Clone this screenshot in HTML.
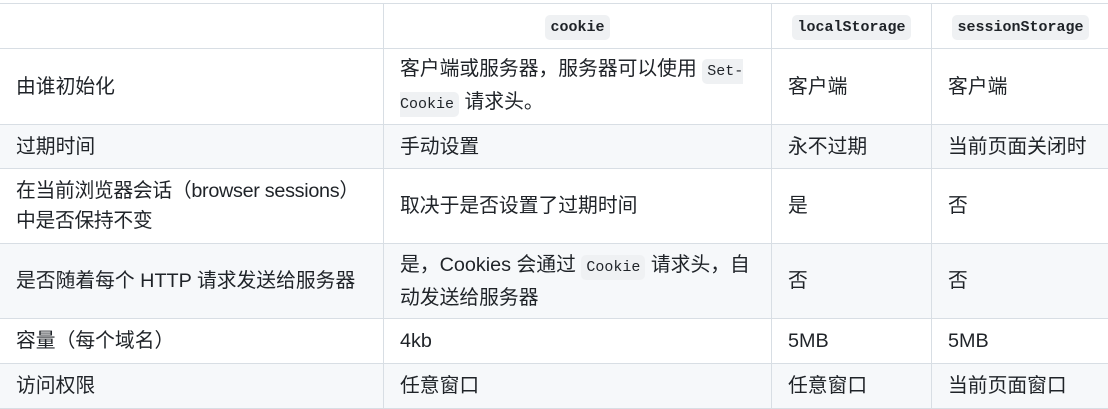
<!DOCTYPE html>
<html><head><meta charset="utf-8"><style>
body{margin:0;background:#fff;width:1108px;height:408px;overflow:hidden;font-family:"Liberation Sans","Noto Sans CJK SC",sans-serif;color:#1f2328;font-size:19.8px;}
table{position:absolute;left:-1px;top:3px;border-collapse:collapse;table-layout:fixed;width:1110px;}
td,th{border:1px solid #d8dee4;padding:0 8px 0 16px;line-height:30px;text-align:left;vertical-align:middle;font-weight:normal}
th{text-align:center;font-weight:bold;height:44px;padding:0 16px}
tr:nth-child(odd) td{background:#f6f8fa}
.b{letter-spacing:-0.3px}
code{font-family:"Liberation Mono",monospace;font-size:15px;background:#eff1f3;border-radius:5px;padding:4px 5px;letter-spacing:0}
th code{font-weight:bold;}
</style></head><body>
<table>
<colgroup><col style="width:384px"><col style="width:388px"><col style="width:160px"><col style="width:178px"></colgroup>
<tr><th></th><th><code>cookie</code></th><th><code>localStorage</code></th><th><code>sessionStorage</code></th></tr>
<tr style="height:76px"><td>由谁初始化</td><td>客户端或服务器，服务器可以使用 <code>Set-Cookie</code> 请求头。</td><td>客户端</td><td>客户端</td></tr>
<tr style="height:44px"><td>过期时间</td><td>手动设置</td><td>永不过期</td><td>当前页面关闭时</td></tr>
<tr style="height:75px"><td class="b">在当前浏览器会话（browser sessions）<br>中是否保持不变</td><td>取决于是否设置了过期时间</td><td>是</td><td>否</td></tr>
<tr style="height:75px"><td>是否随着每个 HTTP 请求发送给服务器</td><td>是，Cookies 会通过 <code>Cookie</code> 请求头，自<br>动发送给服务器</td><td>否</td><td>否</td></tr>
<tr style="height:45px"><td>容量（每个域名）</td><td>4kb</td><td>5MB</td><td>5MB</td></tr>
<tr style="height:45px"><td>访问权限</td><td>任意窗口</td><td>任意窗口</td><td>当前页面窗口</td></tr>
</table>
</body></html>
